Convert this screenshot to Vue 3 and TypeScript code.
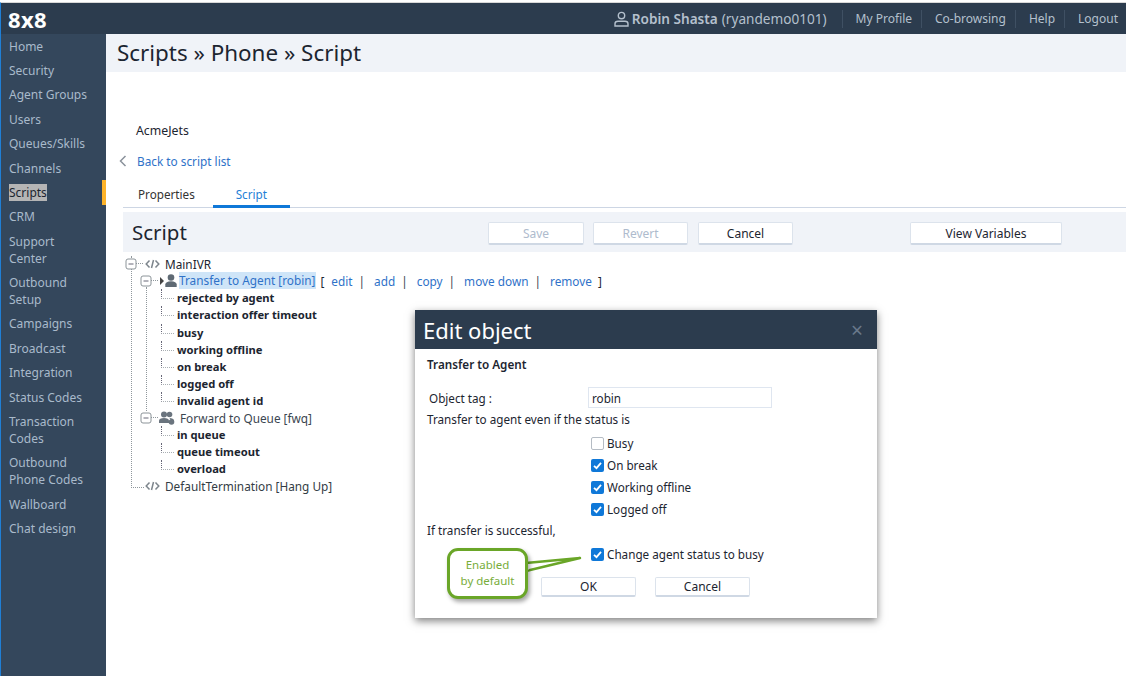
<script setup lang="ts">
const nav: string[] = ['Home','Security','Agent Groups','Users','Queues/Skills','Channels','Scripts','CRM','Support\nCenter','Outbound\nSetup','Campaigns','Broadcast','Integration','Status Codes','Transaction\nCodes','Outbound\nPhone Codes','Wallboard','Chat design']
const agentOutcomes: string[] = ['rejected by agent','interaction offer timeout','busy','working offline','on break','logged off','invalid agent id']
const queueOutcomes: string[] = ['in queue','queue timeout','overload']
const actions: string[] = ['edit','add','copy','move down','remove']
const statuses = [{label:'Busy',on:false},{label:'On break',on:true},{label:'Working offline',on:true},{label:'Logged off',on:true}]
</script>

<template>
  <div class="page">
    <header class="top">
      <div class="logo">8x8</div>
      <div class="user">
        <svg width="15" height="16" viewBox="0 0 15 16" fill="none" stroke="#b4c0cd" stroke-width="1.400"><circle cx="7.500" cy="4.600" r="3.200"/><path d="M1 15v-2.200c0-1.600 1.300-2.600 3-2.600h7c1.700 0 3 1 3 2.600V15z"/></svg>
        <b>Robin Shasta</b> <span>(ryandemo0101)</span>
      </div>
      <nav class="toplinks"><a>My Profile</a><a>Co-browsing</a><a>Help</a><a>Logout</a></nav>
    </header>
    <div class="body">
      <aside class="side">
        <div v-for="n in nav" :key="n" class="nav" :class="{active:n==='Scripts'}"><span>{{ n }}</span></div>
      </aside>
      <main class="main">
        <h1 class="title">Scripts » Phone » Script</h1>
        <div class="content">
          <div class="acct">AcmeJets</div>
          <div class="back"><svg width="8" height="12" viewBox="0 0 8 12" fill="none" stroke="#8a929b" stroke-width="1.500"><path d="M6.500 1 1.500 6l5 5"/></svg><a>Back to script list</a></div>
          <div class="tabs"><span class="tab">Properties</span><span class="tab on">Script</span></div>
          <div class="bar">
            <h2>Script</h2>
            <button class="btn dis b1">Save</button>
            <button class="btn dis b2">Revert</button>
            <button class="btn b3">Cancel</button>
            <button class="btn b4">View Variables</button>
          </div>
          <div class="tree">
            <div class="row r0">
              <svg class="tog" width="12" height="12" viewBox="0 0 12 12"><rect x="1" y="1" width="10" height="10" rx="2" fill="#fff" stroke="#8c9499"/><path d="M3.500 6h5" stroke="#667"/></svg>
              <svg class="code" width="15" height="10" viewBox="0 0 15 10" fill="none" stroke="#7d858c" stroke-width="1.500"><path d="M4.500 1.500 1.200 5l3.300 3.500M10.500 1.500 13.800 5l-3.300 3.500M8.500 1 6.500 9"/></svg>
              <span class="lbl">MainIVR</span>
            </div>
            <div class="row r1">
              <svg class="tog" width="12" height="12" viewBox="0 0 12 12"><rect x="1" y="1" width="10" height="10" rx="2" fill="#fff" stroke="#8c9499"/><path d="M3.500 6h5" stroke="#667"/></svg>
              <svg class="arrow" width="4" height="8" viewBox="0 0 4 8"><path d="M0 0l4 4-4 4z" fill="#444"/></svg>
              <svg class="agent" width="12" height="13" viewBox="0 0 12 13" fill="#5f6a74"><circle cx="6" cy="3.500" r="3.300"/><path d="M.3 13v-2.500C.3 8.600 2.500 7.300 6 7.300s5.700 1.300 5.700 3.200V13z"/></svg>
              <span class="sel">Transfer to Agent [robin]</span>
              <span class="br">[</span>
              <template v-for="(a,i) in actions" :key="a">
                <a class="act" :class="{first:i===0}">{{ a }}</a><span v-if="i<actions.length-1" class="sep">|</span>
              </template>
              <span class="br end">]</span>
            </div>
            <div class="kids">
              <div v-for="o in agentOutcomes" :key="o" class="leaf">{{ o }}</div>
            </div>
            <div class="row r2">
              <svg class="tog" width="12" height="12" viewBox="0 0 12 12"><rect x="1" y="1" width="10" height="10" rx="2" fill="#fff" stroke="#8c9499"/><path d="M3.500 6h5" stroke="#667"/></svg>
              <svg class="group" width="16" height="14" viewBox="0 0 16 14" fill="#6a747e"><circle cx="5" cy="3.500" r="3"/><circle cx="10.500" cy="3.500" r="2.800"/><path d="M0 12V9.500C0 8 2 7 5 7s5 1 5 2.500V12z"/><path d="M10.500 7c2.500 0 4.500 1 4.500 2.500V10h-3z"/><circle cx="12.500" cy="11" r="2.800"/></svg>
              <span class="lbl">Forward to Queue [fwq]</span>
            </div>
            <div class="kids">
              <div v-for="o in queueOutcomes" :key="o" class="leaf">{{ o }}</div>
            </div>
            <div class="row r3">
              <svg class="code" width="15" height="10" viewBox="0 0 15 10" fill="none" stroke="#7d858c" stroke-width="1.500"><path d="M4.500 1.500 1.200 5l3.300 3.500M10.500 1.500 13.800 5l-3.300 3.500M8.500 1 6.500 9"/></svg>
              <span class="lbl">DefaultTermination [Hang Up]</span>
            </div>
          </div>
        </div>
      </main>
    </div>

    <section class="dialog">
      <div class="dhead"><span>Edit object</span><span class="x">×</span></div>
      <div class="dbody">
        <div class="dtitle">Transfer to Agent</div>
        <div class="tagrow"><label>Object tag :</label><input class="inp" value="robin" readonly></div>
        <p class="p1">Transfer to agent even if the status is</p>
        <div class="checks">
          <div v-for="s in statuses" :key="s.label" class="chk">
            <span class="box" :class="{on:s.on}"><svg v-if="s.on" width="13" height="13" viewBox="0 0 13 13" fill="none" stroke="#fff" stroke-width="1.800"><path d="M3 6.800 5.500 9.200 10 3.800"/></svg></span>{{ s.label }}
          </div>
        </div>
        <p class="p2">If transfer is successful,</p>
        <div class="chk solo"><span class="box on"><svg width="13" height="13" viewBox="0 0 13 13" fill="none" stroke="#fff" stroke-width="1.800"><path d="M3 6.800 5.500 9.200 10 3.800"/></svg></span>Change agent status to busy</div>
        <div class="dbtns"><button class="btn dbtn">OK</button><button class="btn dbtn">Cancel</button></div>
      </div>
    </section>

    <svg class="tail" width="58" height="20" viewBox="0 0 58 20"><path d="M0 6 54 1 0 14z" fill="#fff" stroke="#6aa628" stroke-width="2.500" stroke-linejoin="round"/><path d="M-2 7.500h5v5h-5z" fill="#fff"/></svg>
    <div class="callout">Enabled<br>by default</div>
  </div>
</template>

<style>
html,body{margin:0;background:#fff}
</style>
<style scoped>
.page{position:relative;width:1126px;height:676px;overflow:hidden;font-family:"Noto Sans",sans-serif;font-size:12px;color:#1c2530;background:#fff}
.top{box-sizing:content-box;height:31px;margin-top:2px;background:#2c3c4e;display:flex;align-items:center;border-top:1px solid #d8d8d8;color:#b4c0cd;border-left:1px solid #1f7fd6}
.logo{font:700 22px/30px "Noto Sans",sans-serif;color:#fff;padding-left:7px;letter-spacing:.4px}
.user{margin-left:auto;display:flex;align-items:center;gap:3px;font-size:13.600px;white-space:pre}
.user b{font-weight:600}
.user span{margin-left:1px}
.toplinks{display:flex;margin-left:15px;margin-right:8px}
.toplinks a{font-size:12px;line-height:18px;padding:0 9px 0 13px;border-left:1px solid #3f5063;color:#b4c0cd}
.toplinks a:last-child{padding-right:0}
.body{display:flex;height:642px}
.side{width:105px;background:#34475c;border-left:1px solid #1f7fd6;flex:none}
.nav{padding:3.700px 4px 3.700px 8px;line-height:17px;font-size:12px;color:#a9bacb;position:relative;white-space:pre-line}
.nav.active span{background:#b5b5b5;color:#1c2530}
.nav.active::after{content:"";position:absolute;right:0;top:0;bottom:0;width:4px;background:#fdb32a}
.main{flex:1;min-width:0}
.title{margin:0;height:38px;background:#f0f3f8;font:400 22.400px/38px "Noto Sans",sans-serif;padding-left:11px;color:#1c2530}
.content{padding-left:17px}
.acct{margin:50px 0 0 13px;line-height:17px;font-size:12.300px;height:17px}
.back{display:flex;align-items:center;margin-top:13px;height:17px;font-size:11.800px}
.back svg{margin-left:-4px;margin-right:10px}
.back a{color:#2f72c8}
.tabs{display:flex;margin-top:12px;height:26px;border-bottom:1px solid #cdd6e4}
.tab{padding:0 15px;line-height:26px;font-size:11.700px;color:#333}
.tab.on{color:#1f7fd6;border-bottom:3px solid #0f78d8;height:24px;width:47px;text-align:center;margin-left:3px}
.bar{position:relative;height:40px;margin-top:4px;background:#f0f3f8}
.bar h2{margin:0;font:400 20.500px/40px "Noto Sans",sans-serif;padding-left:9px}
.btn{position:absolute;height:23px;padding:0;background:#fff;border:1px solid #dce3ec;border-bottom:2px solid #cfd8e4;border-radius:2px;font:12px "Noto Sans",sans-serif;color:#1c2530;box-sizing:border-box}
.btn.dis{color:#aebbcd}
.b1{left:365px;top:10px;width:96px}
.b2{left:470px;top:10px;width:95px}
.b3{left:575px;top:10px;width:95px}
.b4{left:787px;top:10px;width:152px}
.tree{position:relative;padding-top:3px;font-size:11.800px}
.row{display:flex;align-items:center;height:17.200px;position:relative;white-space:nowrap}
.tog{flex:none;position:relative;z-index:1}
.r0 .tog{margin-left:2px}
.r0 .code{margin-left:8px}
.lbl{margin-left:5px;color:#3b4650}
.r0 .lbl{color:#1c2530}
.r0::after,.r1::after,.r2::after{content:"";position:absolute;top:8px;height:0;width:7px;border-top:1px dotted #8f979c}
.r0::after{left:13px}
.r1::after{left:28px}
.r2::after{left:28px}
.r1 .tog{margin-left:17px}
.arrow{margin-left:7.500px;flex:none}
.agent{margin-left:1px;flex:none}
.sel{margin-left:2.500px;background:#cfe5f8;color:#2f72c8;line-height:17px;padding-right:1px}
.br{margin-left:4px;color:#1c2530}
.act{color:#2f72c8}
.act.first{margin-left:7px}
.sep{color:#3b4650;margin-left:6px;margin-right:9px}
.br.end{margin-left:6px}
.kids{padding-left:54px}
.leaf{height:17.100px;line-height:17.100px;font-weight:700;font-size:11.200px;color:#1c2530;position:relative}
.leaf::before{content:"";position:absolute;left:-16px;top:0;height:9px;width:12px;border-left:1px dotted #667;border-bottom:1px dotted #aab0b4}
.r2 .tog{margin-left:17px}
.group{margin-left:7px;flex:none}
.r2::before{content:"";position:absolute;left:23px;top:-122px;height:124px;border-left:1px dotted #8f979c}
.r3{padding-left:22px}
.r3::before{content:"";position:absolute;left:8px;top:-222px;height:231px;width:12px;border-left:1px dotted #8f979c;border-bottom:1px dotted #8f979c}
.r3 .lbl{color:#333c45}
.dialog{position:absolute;left:415px;top:310px;width:462px;height:308px;background:#fff;box-shadow:0 3px 8px rgba(0,0,0,.5)}
.dhead{height:39px;background:#2c3c4e;display:flex;justify-content:space-between;align-items:center;color:#fff;font-size:22px;padding:0 14px 0 8px}
.x{color:#69788a;font-size:21px}
.dbody{padding:0 12px;position:relative;font-size:11.700px}
.dtitle{font-weight:600;line-height:17px;padding-top:7px}
.tagrow{display:flex;align-items:center;margin-top:14px;padding-left:2px}
.tagrow label{width:159px}
.inp{width:184px;height:21px;box-sizing:border-box;border:1px solid #dfe6f0;font:11.700px "Noto Sans",sans-serif;padding:0 3px;outline:none;color:#1c2530}
.p1,.p2{margin:0;line-height:17px}
.p1{margin-top:3px}
.checks{margin-top:4px;padding-left:164px}
.chk{display:flex;align-items:center;height:22px;gap:3px}
.box{width:13px;height:13px;box-sizing:border-box;border:1px solid #b5bcc4;border-radius:2px;background:#fff;display:block;flex:none}
.box.on{background:#0f78d8;border:0}
.box svg{display:block}
.p2{margin-top:2px}
.solo{padding-left:164px;margin-top:4px}
.dbtns{display:flex;gap:19px;padding-left:114px;margin-top:12px}
.dbtn{position:static;width:95px;height:20px}
.callout{position:absolute;left:447px;top:548px;width:81px;height:51px;box-sizing:border-box;border:3px solid #6aa628;border-radius:11px;background:#fff;color:#78ad3a;font-size:11.500px;line-height:16px;text-align:center;padding-top:6px;box-shadow:2px 3px 4px rgba(0,0,0,.35)}
.tail{position:absolute;left:526px;top:557px;overflow:visible}
</style>
